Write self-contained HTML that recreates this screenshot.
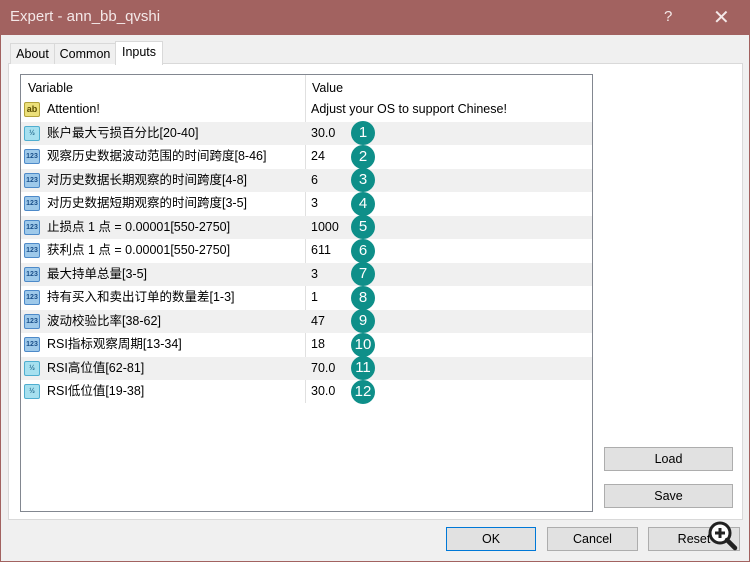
<!DOCTYPE html>
<html><head><meta charset="utf-8"><style>
body{margin:0;width:750px;height:562px;background:#f0f0f0;font-family:"Liberation Sans","Noto Sans CJK SC",sans-serif;font-size:12.5px;color:#000;position:relative;overflow:hidden;border:0}
.title{position:absolute;left:0;top:0;width:750px;height:35px;background:#a26260;color:#f4e8e8;font-size:15px}
.title span{position:absolute;top:8px}
.frame{position:absolute;left:0;top:35px;width:748px;height:526px;border:1px solid #a26260;border-top:0}
.tab{position:absolute;top:43px;height:20px;border:1px solid #d9d9d9;border-bottom:0;background:#f0f0f0;font-size:12.5px;line-height:20px;text-align:center}
.panel{position:absolute;left:8px;top:63px;width:733px;height:455px;background:#fff;border:1px solid #d9d9d9}
.list{position:absolute;left:20px;top:74px;width:571px;height:436px;border:1px solid #828790;background:#fff}
.hdr{position:absolute;left:0;top:0;width:571px;height:24px;font-size:12.5px}
.row{position:absolute;left:0;width:571px;height:23px;line-height:23px}
.row.g{background:#f0f0f0}
.row .n{position:absolute;left:26px;top:0;white-space:nowrap;line-height:23px;height:23px}
.row .v{position:absolute;left:290px;top:0;white-space:nowrap;line-height:23px}
.vline{position:absolute;left:284px;top:0;width:1px;height:328px;background:#e0e0e0}
.ic{position:absolute;left:3px;top:4px;border-radius:2px;font-size:7px;font-weight:bold;text-align:center}
.i123{background:#9ec9ea;color:#1a4f8a;border:1px solid #4d8ac9;width:14px;height:13px;line-height:13px}
.ihalf{background:#a6e0ef;color:#2a6f92;border:1px solid #4faed0;width:14px;height:13px;line-height:13px}
.iab{background:#ece07a;color:#5a4c00;border:1px solid #b3a23a;width:14px;height:13px;line-height:13px;font-size:9px}
.c{position:absolute;left:330px;top:-0.5px;width:24px;height:24px;border-radius:50%;background:#0e8f89;color:#fff;font-size:15px;line-height:24px;text-align:center}
.btn{position:absolute;height:22px;border:1px solid #adadad;background:#e1e1e1;text-align:center;line-height:22px;font-size:12.5px}
</style></head><body>
<div class="title"><span style="left:10px">Expert - ann_bb_qvshi</span><span style="left:664px;font-size:15px">?</span><span style="left:713px;font-size:20px;top:5px">✕</span></div>
<div class="frame"></div>
<div class="panel"></div>
<div class="tab" style="left:10px;width:43px">About</div>
<div class="tab" style="left:54px;width:60px">Common</div>
<div class="tab" style="left:115px;width:46px;top:41px;height:23px;background:#fff">Inputs</div>
<div class="list">
<div class="hdr"><span style="position:absolute;left:7px;top:6px">Variable</span><span style="position:absolute;left:291px;top:6px">Value</span></div>
<div class="vline"></div>
<div class="row" style="top:23px"><div class="ic iab">ab</div><span class="n">Attention!</span><span class="v">Adjust your OS to support Chinese!</span></div>
<div class="row g" style="top:46.5px"><div class="ic ihalf">½</div><span class="n">账户最大亏损百分比[20-40]</span><span class="v">30.0</span><div class="c">1</div></div>
<div class="row" style="top:70px"><div class="ic i123">123</div><span class="n">观察历史数据波动范围的时间跨度[8-46]</span><span class="v">24</span><div class="c">2</div></div>
<div class="row g" style="top:93.5px"><div class="ic i123">123</div><span class="n">对历史数据长期观察的时间跨度[4-8]</span><span class="v">6</span><div class="c">3</div></div>
<div class="row" style="top:117px"><div class="ic i123">123</div><span class="n">对历史数据短期观察的时间跨度[3-5]</span><span class="v">3</span><div class="c">4</div></div>
<div class="row g" style="top:140.5px"><div class="ic i123">123</div><span class="n">止损点 1 点 = 0.00001[550-2750]</span><span class="v">1000</span><div class="c">5</div></div>
<div class="row" style="top:164px"><div class="ic i123">123</div><span class="n">获利点 1 点 = 0.00001[550-2750]</span><span class="v">611</span><div class="c">6</div></div>
<div class="row g" style="top:187.5px"><div class="ic i123">123</div><span class="n">最大持单总量[3-5]</span><span class="v">3</span><div class="c">7</div></div>
<div class="row" style="top:211px"><div class="ic i123">123</div><span class="n">持有买入和卖出订单的数量差[1-3]</span><span class="v">1</span><div class="c">8</div></div>
<div class="row g" style="top:234.5px"><div class="ic i123">123</div><span class="n">波动校验比率[38-62]</span><span class="v">47</span><div class="c">9</div></div>
<div class="row" style="top:258px"><div class="ic i123">123</div><span class="n">RSI指标观察周期[13-34]</span><span class="v">18</span><div class="c">10</div></div>
<div class="row g" style="top:281.5px"><div class="ic ihalf">½</div><span class="n">RSI高位值[62-81]</span><span class="v">70.0</span><div class="c">11</div></div>
<div class="row" style="top:305px"><div class="ic ihalf">½</div><span class="n">RSI低位值[19-38]</span><span class="v">30.0</span><div class="c">12</div></div>
</div>
<div class="btn" style="left:604px;top:447px;width:127px">Load</div>
<div class="btn" style="left:604px;top:484px;width:127px">Save</div>
<div class="btn" style="left:446px;top:527px;width:88px;border:1px solid #0078d7">OK</div>
<div class="btn" style="left:547px;top:527px;width:89px">Cancel</div>
<div class="btn" style="left:648px;top:527px;width:90px">Reset</div>
<svg style="position:absolute;left:706px;top:519px" width="36" height="36"><circle cx="14" cy="14" r="10" fill="#fff" stroke="#222" stroke-width="3"/><path d="M9 14h10M14 9v10" stroke="#222" stroke-width="3"/><path d="M21 21l8 8" stroke="#222" stroke-width="4.5" stroke-linecap="round"/></svg>
</body></html>
